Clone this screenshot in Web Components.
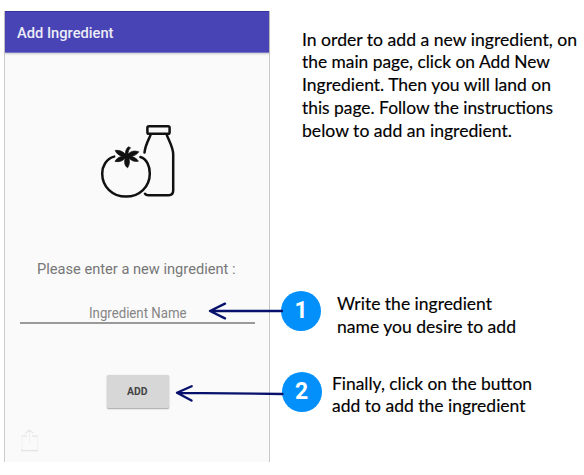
<!DOCTYPE html>
<html lang="en">
<head>
<meta charset="utf-8">
<title>Add Ingredient</title>
<style>
html,body{margin:0;background:#fff}
body{width:584px;height:475px;overflow:hidden}
</style>
</head>
<body>
<guide-page></guide-page>
<script>
const define = (name, html, ready) => customElements.define(name, class extends HTMLElement {
  connectedCallback() {
    if (this.shadowRoot) return;
    this.attachShadow({mode: 'open'}).innerHTML = html;
    if (ready) ready(this);
  }
});

/* A single line of text set to a given width. */
define('text-line', `<style>
:host{display:block;width:max-content;white-space:nowrap;transform-origin:0 50%}
</style><slot></slot>`, el => {
  const natural = el.getBoundingClientRect().width;
  const w = parseFloat(el.getAttribute('w'));
  if (natural && w) el.style.transform = 'scaleX(' + w / natural + ')';
});

define('app-bar', `<style>
:host{display:flex;align-items:center;height:42px;padding:2px 0 0 12px;box-sizing:border-box;background:#4944b6;
border-top:1px solid #37339c;border-bottom:1px solid #7a77c4;box-shadow:0 1px 2px #0003;color:#ececf6;font:500 15px/20px Roboto,sans-serif}
</style><text-line w="96.5"><slot></slot></text-line>`);

define('food-icon', `<style>:host{display:block;width:80px;height:80px}svg{display:block}</style>
<svg width="80" height="80" viewBox="0 0 80 80" fill="none" stroke="#111" stroke-width="2.5" stroke-linecap="round" stroke-linejoin="round">
<rect x="47.4" y="6.2" width="22.2" height="7.6" rx="1.6"/>
<path d="M50.8 14.4C48.8 19.5 45.2 25 44.5 32.6M66.6 14.4C68.6 20.6 73.2 26.8 73.2 34.6V70.6Q73.2 75.2 68.6 75.2H48.4Q46 75.2 45 73.8"/>
<path d="M14.2 36.6C6 38.6 2.2 46.8 2.2 53.4C2.2 66.8 12.6 76.6 26 76.6S49.8 66.8 49.8 53.4C49.8 46.5 47 39 40.4 37"/>
<path stroke-width=".7" fill="#111" d="M25.2 34C25.5 30.5 26.6 28.2 28.4 26.8L30.6 27.8C28.8 29.5 28 31.6 28 34C31.4 31 34.6 30.4 38.8 31.8C36.8 34.8 33.6 36.2 30.5 36.3C34 36.8 36.8 38.6 38.4 41.2C34 42 31.6 40.6 29 38.3C29.8 42 29.6 44.8 27.6 47.8C24.6 46 24 42 25.2 38.3C22.2 41.2 19.4 42.2 15 41.4C16.6 38.2 19.4 36.8 22.6 36.3C19.2 35.6 16.4 33.6 15.2 30.4C19.6 30 22.6 31.2 25.2 34Z"/>
</svg>`);

define('name-field', `<style>
:host{display:flex;justify-content:flex-start;align-items:center;box-sizing:border-box;width:235px;height:20px;padding:0 0 1px 69px;border-bottom:2px solid #9a9a9a;color:#858585;font:14px/18px Roboto,sans-serif}
</style><text-line w="97.5"><slot></slot></text-line>`);

define('push-button', `<style>
:host{display:block}
button{display:flex;justify-content:center;align-items:center;width:62px;height:33px;padding:1px 0 0;border:0;border-radius:1.5px;background:#d7d7d7;box-shadow:0 1px 1.5px #0005,0 0 1px #0002;color:#444;font:700 11px/14px Roboto,sans-serif}
</style><button><text-line w="20.5"><slot></slot></text-line></button>`);

define('share-icon', `<style>:host{display:block;width:20px;height:24px}svg{display:block}</style>
<svg width="20" height="24" viewBox="0 0 20 24" fill="none">
<path stroke="#f2f2f2" stroke-width="1.2" d="M2 7V21.5M17.5 21.5V7M9.5 14V2"/><path stroke="#e9e9e9" stroke-width="1.4" d="M1.5 7H7M12 7H17.5M5.5 4.2L9.5 1.2L13.5 4.2"/><path d="M1 21.6H18" stroke="#e4e4e4" stroke-width="1.4"/>
</svg>`);

define('phone-screen', `<style>
:host{display:flex;flex-direction:column;box-sizing:border-box;width:266px;height:451px;background:#fafafa;border-left:1px solid #ccc;border-right:1px solid #c8c8c8}
food-icon{margin:67px 0 0 95px}
.prompt{margin:59px 0 0 31.5px;color:#777;font:15px/20px Roboto,sans-serif;height:20px}
name-field{margin:25px 0 0 15px}
push-button{margin:51px 0 0 102px}
share-icon{margin:21px 0 0 15px}
</style>
<app-bar>Add Ingredient</app-bar>
<food-icon></food-icon>
<div class="prompt"><text-line w="198.5">Please enter a new ingredient :</text-line></div>
<name-field>Ingredient Name</name-field>
<push-button>ADD</push-button>
<share-icon></share-icon>`);

define('step-badge', `<style>
:host{display:flex;justify-content:center;align-items:center;width:40px;height:40px;border-radius:50%;background:#0490fb;color:#fff;font:700 23px/24px Roboto,sans-serif}
</style><slot></slot>`);

define('text-block', `<style>
:host{display:block;color:#000;font:17.5px/22.7px Lato,Carlito,sans-serif;-webkit-text-stroke:.15px #000}
</style><slot></slot>`);

/* Callout arrows cross the phone edge, so they sit on a layer over the page. */
define('callout-arrows', `<style>:host{position:absolute;inset:0;pointer-events:none}svg{display:block}</style>
<svg width="584" height="475" fill="none" stroke="#07116b" stroke-width="2.3" stroke-linecap="round" stroke-linejoin="round">
<path d="M282 311H210M225 303.6L210 311L225 318.4"/>
<path d="M282.5 394L177 392.8M191.7 386.2L177 392.8L191.5 400.6"/>
</svg>`);

define('guide-page', `<style>
:host{display:flex;position:relative;width:584px;height:475px;box-sizing:border-box;padding:11px 0 0 4px}
.notes{width:314px;display:flex;flex-direction:column}
.intro{margin:17.7px 0 0 32px}
.step{display:flex;align-items:flex-start}
.one{margin:149.8px 0 0 11px;height:46px}
.two{margin:34.7px 0 0 11.5px}
.one step-badge{margin-top:-1px}
.two step-badge{margin-top:-1px}
.one text-block{margin:1px 0 0 15.5px}
.two text-block{margin:0 0 0 10.5px}
</style>
<phone-screen></phone-screen>
<div class="notes">
<text-block class="intro"><text-line w="275">In order to add a new ingredient, on</text-line><text-line w="248">the main page, click on Add New</text-line><text-line w="249">Ingredient. Then you will land on</text-line><text-line w="251">this page. Follow the instructions</text-line><text-line w="210">below to add an ingredient.</text-line></text-block>
<div class="step one"><step-badge>1</step-badge><text-block><text-line w="155">Write the ingredient</text-line><text-line w="179">name you desire to add</text-line></text-block></div>
<div class="step two"><step-badge>2</step-badge><text-block><text-line w="200">Finally, click on the button</text-line><text-line w="193.5">add to add the ingredient</text-line></text-block></div>
</div>
<callout-arrows></callout-arrows>`);
</script>
</body>
</html>
